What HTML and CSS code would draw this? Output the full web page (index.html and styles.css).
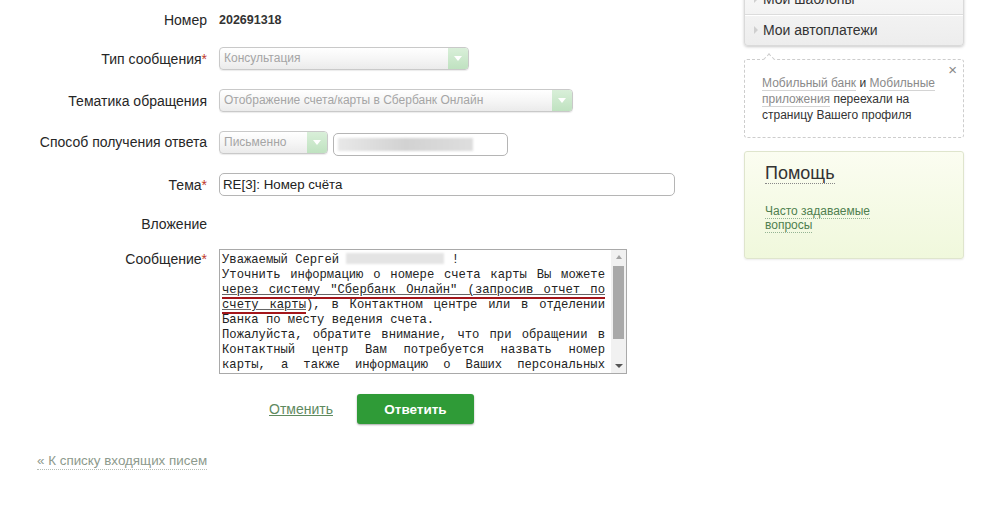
FILE: index.html
```html
<!DOCTYPE html>
<html lang="ru">
<head>
    <meta charset="UTF-8" />
    <meta name="viewport" content="width=device-width, initial-scale=1.0" />
    <title>Сбербанк Онлайн - Письмо</title>
    <link rel="stylesheet" href="styles.css">
</head>
<body>
    <div class="page">
        <div class="main">
            <div class="form">
                <div class="row r-number">
                    <div class="label">Номер</div>
                    <div class="field value">202691318</div>
                </div>

                <div class="row r-type">
                    <div class="label">Тип сообщения<span class="req">*</span></div>
                    <div class="field select select-type">
                        <span class="select-text">Консультация</span>
                        <span class="select-arrow"></span>
                    </div>
                </div>

                <div class="row r-theme">
                    <div class="label">Тематика обращения</div>
                    <div class="field select select-theme">
                        <span class="select-text">Отображение счета/карты в Сбербанк Онлайн</span>
                        <span class="select-arrow"></span>
                    </div>
                </div>

                <div class="row r-way">
                    <div class="label">Способ получения ответа</div>
                    <div class="field select select-way">
                        <span class="select-text">Письменно</span>
                        <span class="select-arrow"></span>
                    </div>
                    <div class="input input-mail"><span class="hidden-data"></span></div>
                </div>

                <div class="row r-subject">
                    <div class="label">Тема<span class="req">*</span></div>
                    <div class="field input input-subject">RE[3]: Номер счёта</div>
                </div>

                <div class="row r-attach">
                    <div class="label">Вложение</div>
                </div>

                <div class="row r-message">
                    <div class="label">Сообщение<span class="req">*</span></div>
                    <div class="field message">
                        <div class="message-text">
                            Уважаемый Сергей <span class="hidden-name"></span> !<br>
                            Уточнить информацию о номере счета карты Вы можете <span class="mark">через систему "Сбербанк Онлайн" (запросив отчет по счету карты</span>), в Контактном центре или в отделении Банка по месту ведения счета.<br>
                            Пожалуйста, обратите внимание, что при обращении в Контактный центр Вам потребуется назвать номер карты, а также информацию о Ваших персональных данных (ФИО, паспортные данные, кодовое слово).<br>
                            С уважением, Сбербанк России
                        </div>
                        <div class="scrollbar">
                            <span class="sb-up"></span>
                            <span class="sb-thumb"></span>
                            <span class="sb-down"></span>
                        </div>
                    </div>
                </div>

                <div class="actions">
                    <a href="#" class="cancel">Отменить</a>
                    <button type="button" class="btn-reply">Ответить</button>
                </div>

                <a href="#" class="back">« К списку входящих писем</a>
            </div>
        </div>

        <div class="sidebar">
            <div class="menu">
                <div class="menu-item"><span class="menu-arrow"></span>Мои шаблоны</div>
                <div class="menu-item"><span class="menu-arrow"></span>Мои автоплатежи</div>
            </div>

            <div class="notice">
                <span class="notice-close">×</span>
                <a href="#" class="notice-link">Мобильный банк</a> и <a href="#" class="notice-link">Мобильные приложения</a> переехали на страницу Вашего профиля
            </div>

            <div class="help">
                <div class="help-title"><span>Помощь</span></div>
                <div class="help-links">
                    <a href="#" class="help-link">Часто задаваемые вопросы</a>
                </div>
            </div>
        </div>
    </div>
</body>
</html>
```

FILE: styles.css
```css
body {
    margin: 0;
    font-family: "Liberation Sans", Arial, sans-serif;
    font-size: 13px;
    color: #333;
    background-color: #fff;
}

a {
    text-decoration: none;
}

.page {
    display: flex;
    align-items: flex-start;
}

.main {
    flex: none;
    width: 744px;
}

.sidebar {
    flex: none;
    width: 220px;
    margin-top: -16px;
}

/* форма письма */
.form {
    padding-top: 10px;
}

.row {
    display: flex;
    align-items: center;
}

.label {
    flex: none;
    width: 207px;
    text-align: right;
    font-size: 14px;
    color: #262626;
}

.req {
    color: #c0392b;
}

.field {
    margin-left: 12px;
}

.r-number {
    height: 20px;
}

.value {
    color: #333;
    font-weight: bold;
    font-size: 12.5px;
}

.r-type {
    margin-top: 17px;
    height: 23px;
}

.r-theme {
    margin-top: 19px;
    height: 23px;
}

.r-way {
    margin-top: 19px;
    height: 25px;
    align-items: flex-start;
}

.r-way .label {
    line-height: 23px;
}

.r-subject {
    margin-top: 17px;
    height: 23px;
}

.r-attach {
    margin-top: 18px;
    height: 20px;
}

.r-message {
    margin-top: 15px;
    align-items: flex-start;
}

.r-message .label {
    padding-top: 3px;
    line-height: 15px;
}

/* выпадающие списки */
.select {
    display: flex;
    box-sizing: border-box;
    height: 23px;
    border: 1px solid #c9c9c9;
    border-radius: 4px;
    background: linear-gradient(#ffffff, #f6f6f6 50%, #ebebeb);
    box-shadow: 0 1px 1px rgba(0, 0, 0, 0.08);
    overflow: hidden;
}

.select-type {
    width: 250px;
}

.select-theme {
    width: 354px;
}

.select-way {
    width: 109px;
}

.select-text {
    flex: 1;
    padding-left: 4px;
    line-height: 21px;
    font-size: 12px;
    color: #a5a5a5;
    white-space: nowrap;
    overflow: hidden;
}

.select-arrow {
    flex: none;
    width: 20px;
    display: flex;
    align-items: center;
    justify-content: center;
    background: linear-gradient(#d9efd9, #bfe2c0);
}

.select-arrow::after {
    content: "";
    border-left: 4px solid transparent;
    border-right: 4px solid transparent;
    border-top: 5px solid #fff;
}

/* поля ввода */
.input {
    box-sizing: border-box;
    height: 23px;
    border: 1px solid #b5b5b5;
    border-radius: 5px;
    background-color: #fff;
}

.input-mail {
    width: 175px;
    margin-top: 2px;
    margin-left: 5px;
    padding: 4px 0 0 4px;
}

.hidden-data {
    display: block;
    width: 135px;
    height: 13px;
    background: linear-gradient(90deg, #e8e8e8, #d2d2d2 50%, #dedede);
    filter: blur(1px);
}

.input-subject {
    width: 456px;
    padding-left: 3px;
    line-height: 21px;
    font-size: 13.3px;
    color: #222;
}

/* текст сообщения */
.message {
    display: flex;
    box-sizing: border-box;
    width: 408px;
    height: 125px;
    border: 1px solid #a9a9a9;
    overflow: hidden;
}

.message-text {
    flex: 1;
    padding: 3px 6px 0 2px;
    font-family: "Liberation Mono", "DejaVu Sans Mono", monospace;
    font-size: 12.2px;
    line-height: 15px;
    text-align: justify;
    color: #222;
}

.scrollbar {
    flex: none;
    width: 15px;
    display: flex;
    flex-direction: column;
    align-items: center;
    background-color: #f1f1f1;
}

.sb-up,
.sb-down {
    flex: none;
    height: 14px;
    display: flex;
    align-items: center;
    justify-content: center;
}

.sb-up::after {
    content: "";
    border-left: 3px solid transparent;
    border-right: 3px solid transparent;
    border-bottom: 4px solid #a3a3a3;
}

.sb-down {
    margin-top: auto;
}

.sb-down::after {
    content: "";
    border-left: 4px solid transparent;
    border-right: 4px solid transparent;
    border-top: 4px solid #555;
}

.sb-thumb {
    width: 11px;
    height: 73px;
    margin-top: 2px;
    background-color: #a9a9a9;
}

.hidden-name {
    display: inline-block;
    width: 98px;
    height: 11px;
    vertical-align: -1px;
    background-color: #e4e4e4;
    filter: blur(1px);
}

.mark {
    text-decoration: underline;
    text-decoration-color: #666;
    border-bottom: 2px solid #a3161b;
}

/* кнопки */
.actions {
    display: flex;
    align-items: center;
    margin-top: 20px;
    margin-left: 269px;
    height: 30px;
}

.cancel {
    color: #5f8a5f;
    text-decoration: underline;
    font-size: 14px;
}

.btn-reply {
    width: 117px;
    height: 30px;
    margin-left: 24px;
    border: none;
    border-radius: 3px;
    background-color: #2f9b37;
    box-shadow: 0 1px 2px rgba(0, 0, 0, 0.35);
    color: #fff;
    font-family: "Liberation Sans", Arial, sans-serif;
    font-size: 13.5px;
    font-weight: bold;
    cursor: pointer;
}

.back {
    display: inline-block;
    margin-top: 29px;
    margin-left: 37px;
    line-height: 16px;
    font-size: 13.4px;
    color: #8d9a8d;
    border-bottom: 1px dotted #b5bdb5;
}

/* правая колонка */
.menu {
    border: 1px solid #dadada;
    border-top: none;
    border-radius: 0 0 4px 4px;
    background: linear-gradient(#f8f8f8, #ededed);
    box-shadow: 0 1px 3px rgba(0, 0, 0, 0.22);
}

.menu-item {
    height: 30px;
    line-height: 30px;
    padding-left: 9px;
    font-size: 14px;
    color: #333;
}

.menu-item + .menu-item {
    border-top: 1px solid #dcdcdc;
    box-shadow: inset 0 1px 0 #fff;
}

.menu-arrow {
    display: inline-block;
    margin-right: 5px;
    vertical-align: 1px;
    border-top: 4px solid transparent;
    border-bottom: 4px solid transparent;
    border-left: 4px solid #cfcfcf;
}

.notice {
    position: relative;
    margin-top: 13px;
    padding: 15px 18px 14px 17px;
    border: 1px dashed #cdcdcd;
    border-radius: 3px;
    font-size: 12px;
    line-height: 16px;
    color: #333;
}

.notice::before {
    content: "";
    position: absolute;
    top: -5px;
    left: 20px;
    width: 7px;
    height: 7px;
    background-color: #fff;
    border-top: 1px dashed #cdcdcd;
    border-left: 1px dashed #cdcdcd;
    transform: rotate(45deg);
}

.notice-close {
    position: absolute;
    top: 2px;
    right: 6px;
    font-size: 15px;
    color: #888;
}

.notice-link {
    color: #8a8a8a;
    border-bottom: 1px solid #d4d4d4;
}

.help {
    box-sizing: border-box;
    height: 108px;
    margin-top: 13px;
    padding: 10px 20px 0 20px;
    border: 1px solid #dfe5cd;
    border-radius: 3px;
    background: linear-gradient(#fbfdf1, #f0f8dc);
    box-shadow: 0 1px 2px rgba(0, 0, 0, 0.08);
}

.help-title {
    font-size: 18px;
    line-height: 22px;
    color: #333;
}

.help-title span {
    border-bottom: 1px dotted #888;
}

.help-links {
    width: 130px;
    margin-top: 20px;
    font-size: 12px;
    line-height: 14px;
}

.help-link {
    color: #4f7f4f;
    border-bottom: 1px dotted #94b494;
}
```
